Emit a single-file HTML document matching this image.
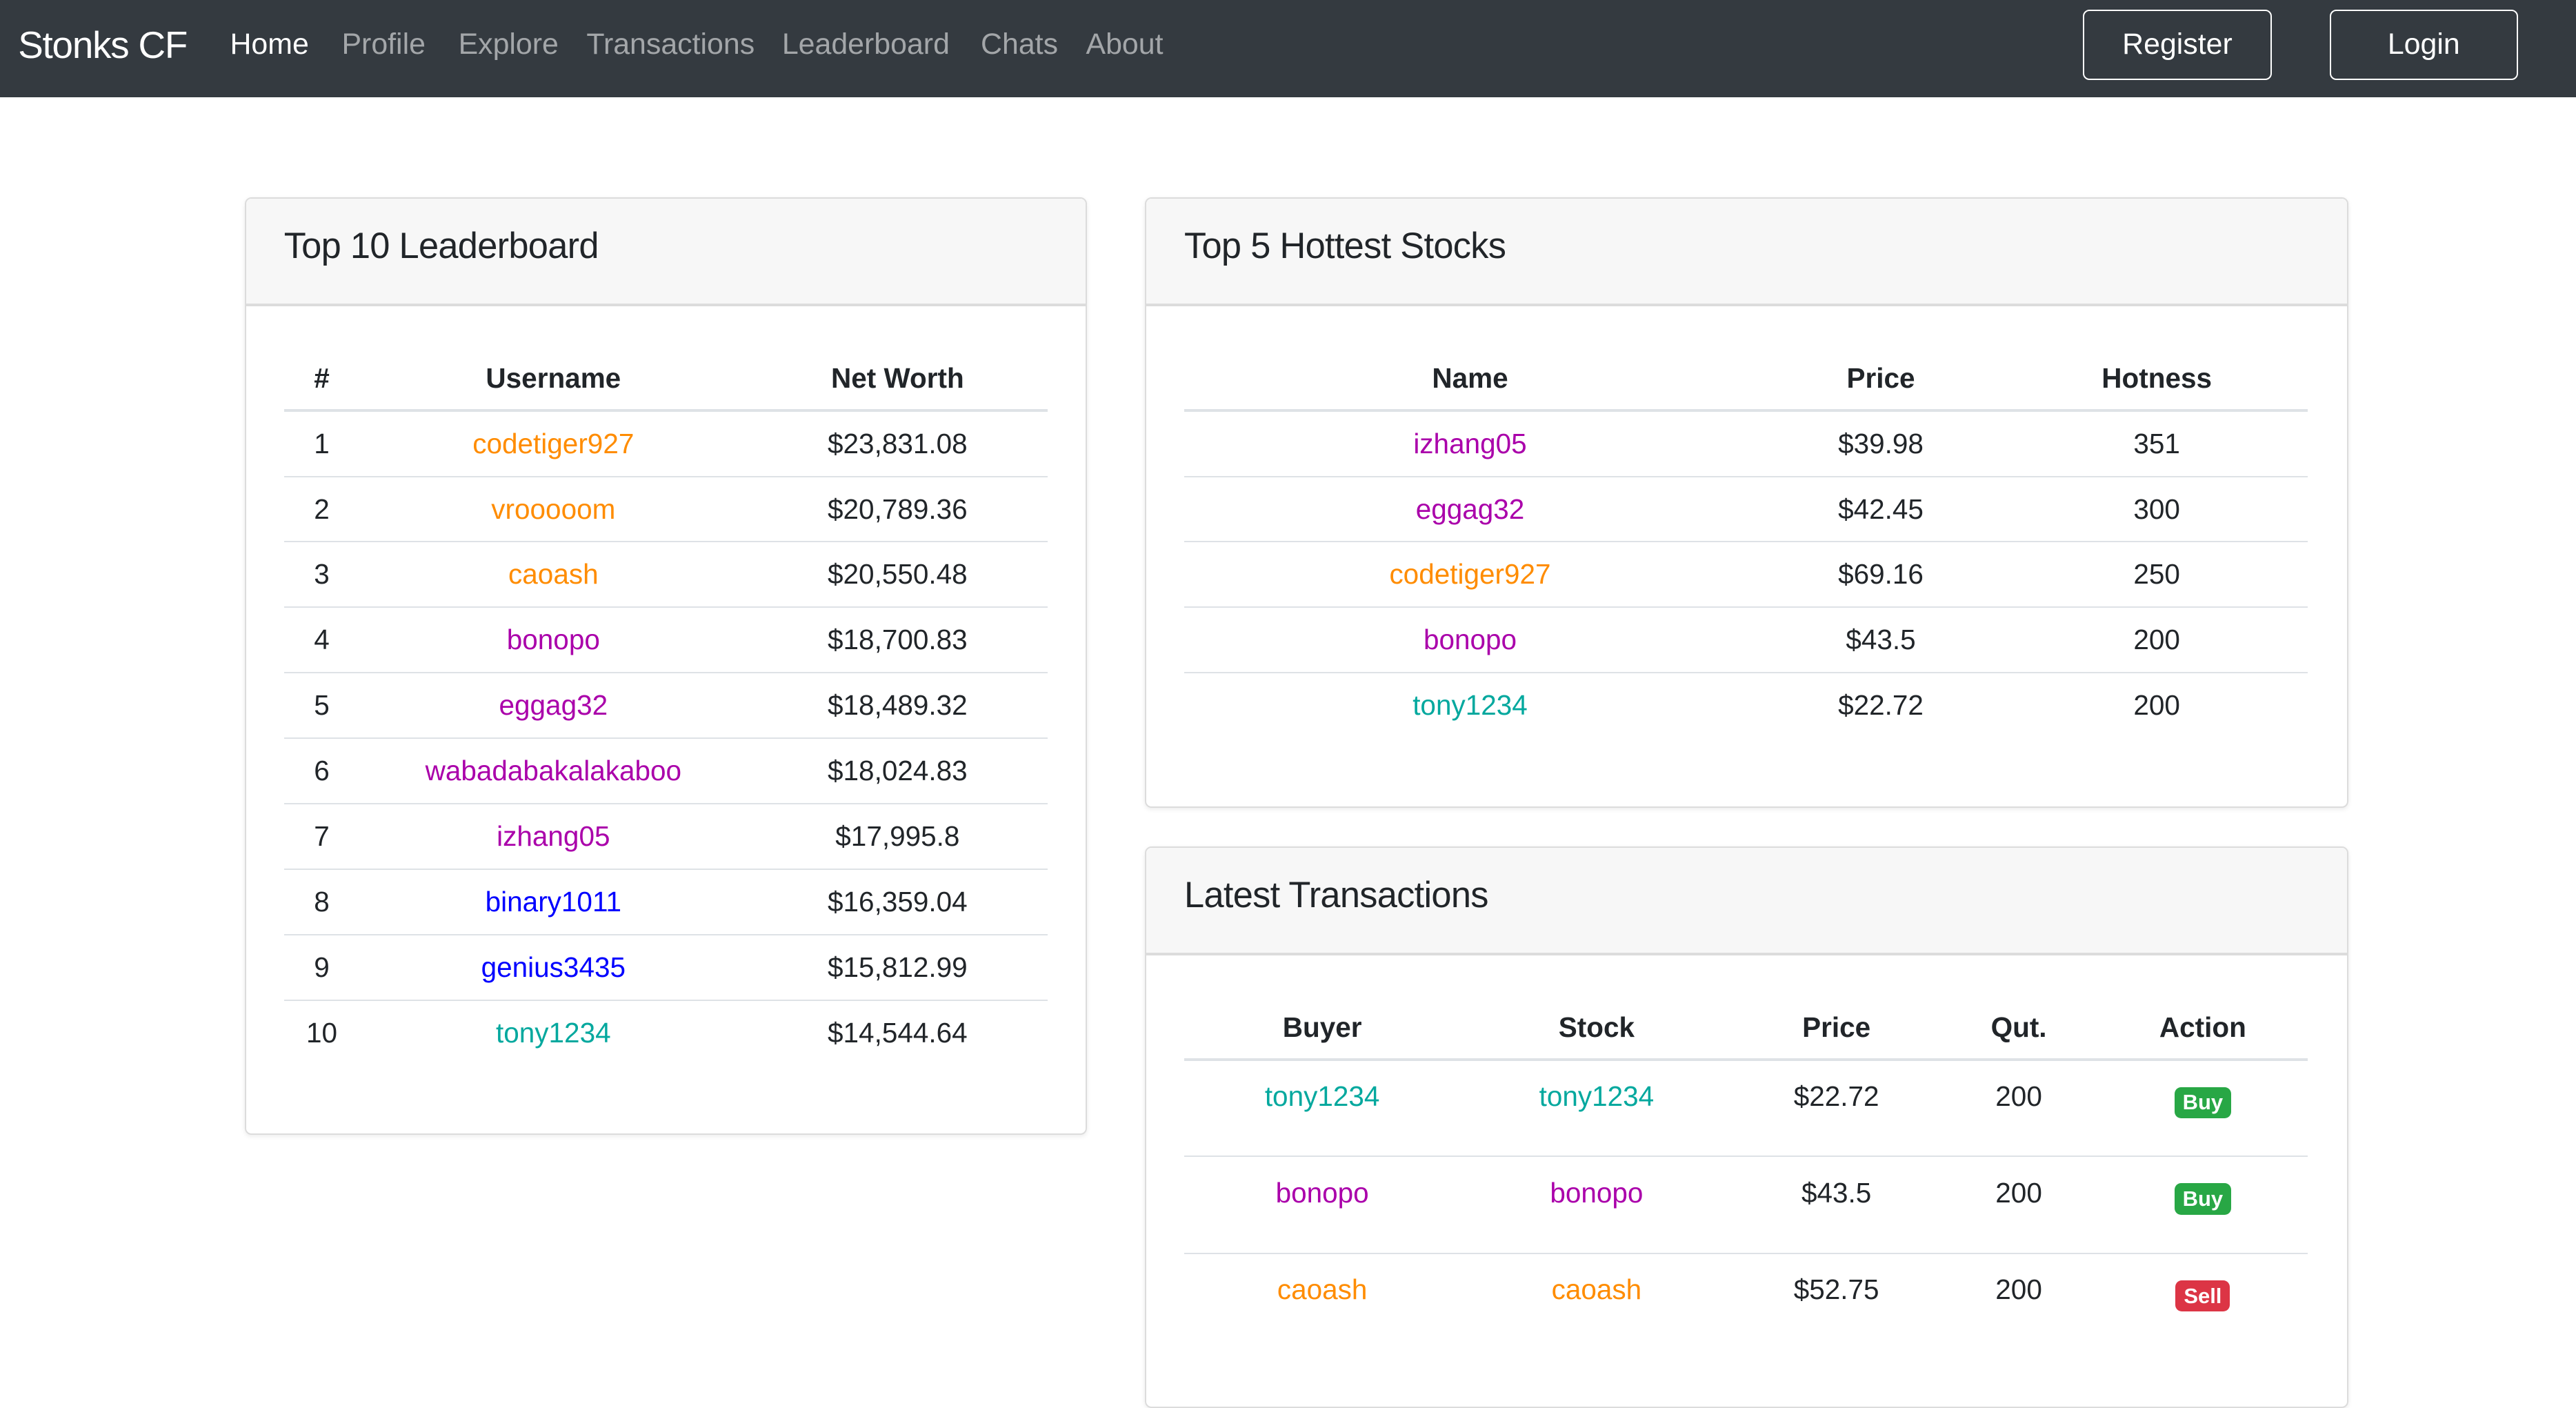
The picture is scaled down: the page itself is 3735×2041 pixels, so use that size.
<!DOCTYPE html>
<html><head><meta charset="utf-8"><style>
html{zoom:2.382}
body{margin:0;width:1568px;height:833px;overflow:hidden;background:#fff;font-family:"Liberation Sans",sans-serif;color:#212529;position:relative}
.nav{position:absolute;left:0;top:0;width:1568px;height:59px;background:#343a40}
.brand{position:absolute;left:11px;top:14px;font-size:23px;color:#fff;letter-spacing:-0.5px}
.nl{position:absolute;top:17px;font-size:18px;color:rgba(255,255,255,.55);white-space:nowrap}
.a{color:#fff}
.btn{position:absolute;top:6px;width:113px;height:41px;border:1px solid #fff;border-radius:4px;color:#fff;font-size:18px;text-align:center;line-height:41px}
.card{position:absolute;border:1px solid #dcdcdc;border-radius:4px;background:#fff;box-shadow:0 1px 3px rgba(0,0,0,.08);overflow:hidden}
.ch{height:64px;background:#f7f7f7;border-bottom:2px solid #dcdcdc;font-size:22px;line-height:58px;padding-left:23px;letter-spacing:-0.3px}
table{border-collapse:collapse;table-layout:fixed;position:absolute;font-size:17px}
th{font-weight:bold;height:37px;border-bottom:2px solid #dee2e6;text-align:center;padding:0;vertical-align:middle}
td{text-align:center;height:39px;border-top:1px solid #dee2e6;padding:0}
tr:nth-child(2) td{border-top:none}
.o{color:#ff8c00}.p{color:#aa00aa}.b{color:#0000ff}.t{color:#03a89e}
.tx td{height:59px;vertical-align:top;padding-top:12px;box-sizing:border-box}
.bd{display:inline-block;color:#fff;font-weight:bold;font-size:13px;padding:2px 5px;border-radius:4px;margin-top:4px}
.g{background:#28a745}.r{background:#dc3545}
</style></head><body>
<div class="nav">
<div class="brand">Stonks CF</div>
<div class="nl a" style="left:140px">Home</div>
<div class="nl" style="left:208px">Profile</div>
<div class="nl" style="left:279px">Explore</div>
<div class="nl" style="left:357px">Transactions</div>
<div class="nl" style="left:476px">Leaderboard</div>
<div class="nl" style="left:597px">Chats</div>
<div class="nl" style="left:661px">About</div>
<div class="btn" style="left:1268px">Register</div>
<div class="btn" style="left:1418px">Login</div>
</div>

<div class="card" style="left:149px;top:120px;width:511px;height:569px">
<div class="ch">Top 10 Leaderboard</div>
<table style="left:23px;top:91px;width:465px">
<tr><th style="width:46px">#</th><th style="width:236px">Username</th><th>Net Worth</th></tr>
<tr><td>1</td><td class="o">codetiger927</td><td>$23,831.08</td></tr>
<tr><td>2</td><td class="o">vrooooom</td><td>$20,789.36</td></tr>
<tr><td>3</td><td class="o">caoash</td><td>$20,550.48</td></tr>
<tr><td>4</td><td class="p">bonopo</td><td>$18,700.83</td></tr>
<tr><td>5</td><td class="p">eggag32</td><td>$18,489.32</td></tr>
<tr><td>6</td><td class="p">wabadabakalakaboo</td><td>$18,024.83</td></tr>
<tr><td>7</td><td class="p">izhang05</td><td>$17,995.8</td></tr>
<tr><td>8</td><td class="b">binary1011</td><td>$16,359.04</td></tr>
<tr><td>9</td><td class="b">genius3435</td><td>$15,812.99</td></tr>
<tr><td>10</td><td class="t">tony1234</td><td>$14,544.64</td></tr>
</table>
</div>

<div class="card" style="left:697px;top:120px;width:731px;height:370px">
<div class="ch">Top 5 Hottest Stocks</div>
<table style="left:23px;top:91px;width:684px">
<tr><th style="width:348px">Name</th><th style="width:152px">Price</th><th>Hotness</th></tr>
<tr><td class="p">izhang05</td><td>$39.98</td><td>351</td></tr>
<tr><td class="p">eggag32</td><td>$42.45</td><td>300</td></tr>
<tr><td class="o">codetiger927</td><td>$69.16</td><td>250</td></tr>
<tr><td class="p">bonopo</td><td>$43.5</td><td>200</td></tr>
<tr><td class="t">tony1234</td><td>$22.72</td><td>200</td></tr>
</table>
</div>

<div class="card" style="left:697px;top:515px;width:731px;height:340px">
<div class="ch">Latest Transactions</div>
<table class="tx" style="left:23px;top:91px;width:684px">
<tr><th style="width:168px">Buyer</th><th style="width:166px">Stock</th><th style="width:126px">Price</th><th style="width:96px">Qut.</th><th>Action</th></tr>
<tr><td class="t">tony1234</td><td class="t">tony1234</td><td>$22.72</td><td>200</td><td><span class="bd g">Buy</span></td></tr>
<tr><td class="p">bonopo</td><td class="p">bonopo</td><td>$43.5</td><td>200</td><td><span class="bd g">Buy</span></td></tr>
<tr><td class="o">caoash</td><td class="o">caoash</td><td>$52.75</td><td>200</td><td><span class="bd r">Sell</span></td></tr>
</table>
</div>
</body></html>
